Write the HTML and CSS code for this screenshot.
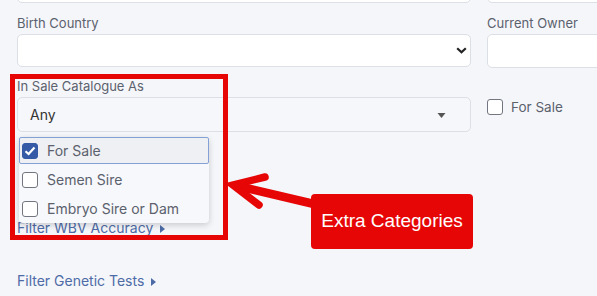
FILE: index.html
```html
<!DOCTYPE html>
<html lang="en">
<head>
    <meta charset="UTF-8">
    <meta name="viewport" content="width=device-width, initial-scale=1.0">
    <title>Search Filters</title>
    <link rel="stylesheet" href="styles.css">
</head>
<body>
    <div class="page">
        <div class="row">
            <div class="field">
                <div class="input"></div>
            </div>
            <div class="field">
                <div class="input"></div>
            </div>
        </div>

        <div class="row">
            <div class="field">
                <label class="label">Birth Country</label>
                <div class="input select">
                    <svg class="chevron" width="11" height="7" viewBox="0 0 11 7">
                        <path d="M1.2 1.2 L5.5 5.3 L9.8 1.2" fill="none" stroke="#222" stroke-width="2.2"/>
                    </svg>
                </div>
            </div>
            <div class="field">
                <label class="label">Current Owner</label>
                <div class="input tall"></div>
            </div>
        </div>

        <div class="row">
            <div class="field sale">
                <label class="label">In Sale Catalogue As</label>
                <div class="input picker">
                    <span class="value">Any</span>
                    <svg class="caret" width="9" height="5" viewBox="0 0 9 5">
                        <path d="M0.5 0 L8.5 0 L4.5 5 Z" fill="#555"/>
                    </svg>
                </div>
                <div class="menu">
                    <div class="option active">
                        <span class="box checked">
                            <svg width="12" height="10" viewBox="0 0 12 10">
                                <path d="M1.5 5.2 L4.6 8 L10.5 1.6" fill="none" stroke="#fff" stroke-width="2.2"/>
                            </svg>
                        </span>
                        For Sale
                    </div>
                    <div class="option"><span class="box"></span>Semen Sire</div>
                    <div class="option"><span class="box"></span>Embryo Sire or Dam</div>
                </div>
            </div>
            <div class="field">
                <div class="check">
                    <span class="box"></span>
                    For Sale
                </div>
            </div>
        </div>

        <a class="toggle first">Filter WBV Accuracy
            <svg class="tri" width="5" height="8" viewBox="0 0 5 8"><path d="M0 0 L5 4 L0 8 Z" fill="#4d6ba6"/></svg>
        </a>
        <a class="toggle second">Filter Genetic Tests
            <svg class="tri" width="5" height="8" viewBox="0 0 5 8"><path d="M0 0 L5 4 L0 8 Z" fill="#4d6ba6"/></svg>
        </a>
    </div>

    <!-- annotation overlay -->
    <div class="highlight"></div>
    <svg class="arrow" width="597" height="296" viewBox="0 0 597 296">
        <path d="M238 186 L314 204" stroke="#e60606" stroke-width="8.5" fill="none"/>
        <path d="M265 177 L233 185 L259 205" stroke="#e60606" stroke-width="7.5" fill="none" stroke-linecap="round" stroke-linejoin="miter"/>
    </svg>
    <div class="callout">Extra Categories</div>
</body>
</html>
```

FILE: styles.css
```css
body {
    margin: 0;
    background-color: #f5f6fa;
    font-family: Inter, "Noto Sans", sans-serif;
    overflow: hidden;
    width: 597px;
    height: 296px;
    position: relative;
}
.page {
    padding: 0 17px;
    margin-top: -31px;
}
.row {
    display: grid;
    grid-template-columns: 454px 454px;
    column-gap: 16px;
    margin-bottom: 10px;
}
.field {
    position: relative;
}
.label {
    display: block;
    font-size: 13px;
    line-height: 16px;
    color: #5b616d;
    margin-bottom: 3px;
}
.row:first-child {
    margin-bottom: 12px;
}
.input {
    box-sizing: border-box;
    height: 34px;
    background: #fff;
    border: 1px solid #dcdfe5;
    border-radius: 5px;
}
.select {
    height: 33px;
    position: relative;
}
.tall {
    height: 34px;
}
.chevron {
    position: absolute;
    right: 3px;
    top: 12px;
}
.picker {
    height: 35px;
    background: #f6f7fa;
    display: flex;
    align-items: center;
    justify-content: space-between;
    padding: 0 24px 0 12px;
}
.value {
    font-size: 14px;
    color: #333;
    padding-bottom: 1px;
}
.caret {
    margin-top: 1px;
}
.menu {
    position: absolute;
    left: 2px;
    top: 59px;
    width: 190px;
    height: 86px;
    box-sizing: border-box;
    background: #f7f8fb;
    border-radius: 4px;
    box-shadow: 0 2px 6px rgba(0, 0, 0, 0.18);
    z-index: 2;
}
.option {
    display: flex;
    align-items: center;
    height: 29px;
    padding-left: 3px;
    font-size: 14px;
    color: #5b616d;
}
.option.active {
    box-sizing: border-box;
    height: 27px;
    margin-bottom: 1px;
    padding-left: 2px;
    background: #eef0f4;
    border: 1px solid #84a1d6;
    border-radius: 2px;
}
.box {
    box-sizing: border-box;
    width: 16px;
    height: 16px;
    border: 1.5px solid #727680;
    border-radius: 3px;
    background: #fff;
    margin-right: 9px;
    display: inline-flex;
    align-items: center;
    justify-content: center;
    flex-shrink: 0;
}
.box.checked {
    background: #365ba6;
    border-color: #365ba6;
}
.check {
    display: flex;
    align-items: center;
    margin-top: 21px;
    font-size: 13.5px;
    color: #5b616d;
}
.check .box {
    margin-right: 8px;
}
.toggle {
    display: block;
    font-size: 14px;
    line-height: 20px;
    color: #4d6ba6;
}
.toggle.first {
    margin-top: 86px;
}
.toggle.second {
    margin-top: 33px;
}
.tri {
    margin-left: 3px;
    vertical-align: 0;
}
.highlight {
    position: absolute;
    left: 10px;
    top: 74px;
    width: 208px;
    height: 156px;
    border: 5px solid #e60606;
    z-index: 3;
}
.arrow {
    position: absolute;
    left: 0;
    top: 0;
    z-index: 3;
}
.callout {
    position: absolute;
    left: 311px;
    top: 194px;
    width: 162px;
    height: 55px;
    box-sizing: border-box;
    background: #e60606;
    border-radius: 4px;
    color: #fff;
    font-family: "Liberation Sans", Arial, sans-serif;
    font-size: 19px;
    display: flex;
    align-items: center;
    justify-content: center;
    padding-bottom: 2px;
    z-index: 4;
}
```
